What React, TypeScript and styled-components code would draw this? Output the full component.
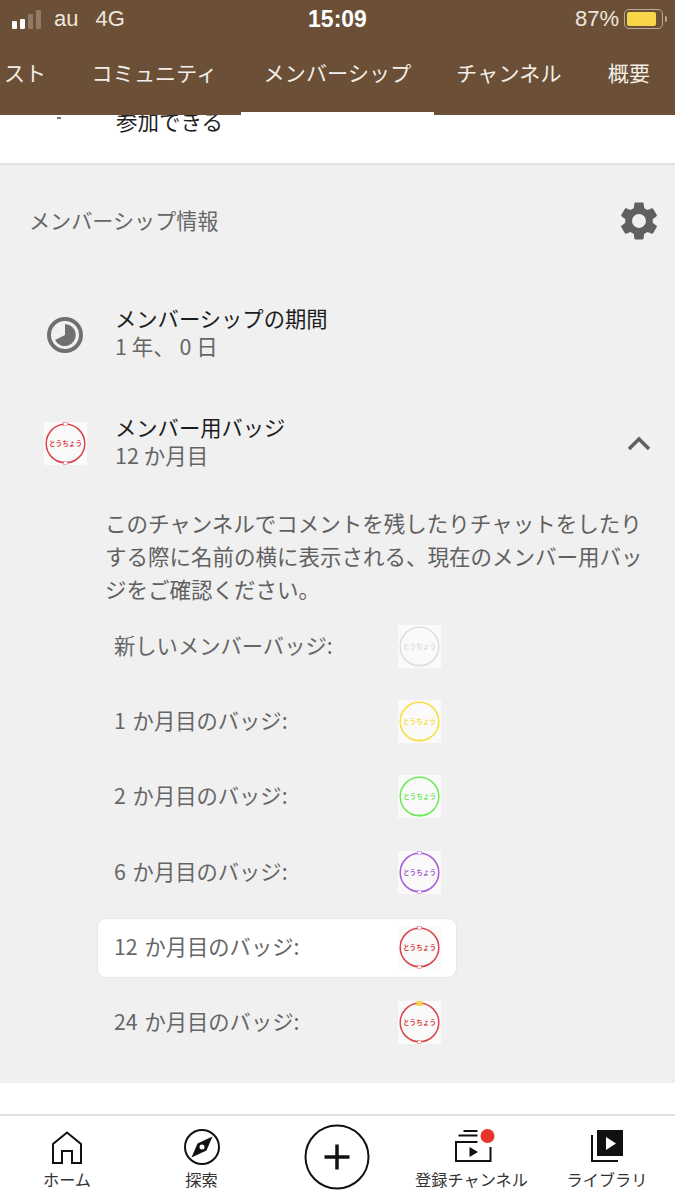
import React from "react"
import styled, { createGlobalStyle } from "styled-components"
import { MdSettings } from "react-icons/md"

const GlobalStyle = createGlobalStyle`
  html, body { margin: 0; padding: 0; background: #fff; }
  body { font-family: "Noto Sans CJK JP", "Liberation Sans", sans-serif; }
`

const Page = styled.div`
  width: 675px;
  height: 1200px;
  overflow: hidden;
  display: flex;
  flex-direction: column;
  position: relative;
`

const Header = styled.header`
  height: 115px;
  flex: none;
  background: #6b5037;
  color: #fff;
  position: relative;
  z-index: 1;
  overflow: hidden;
`

const StatusBar = styled.div`
  height: 38px;
  display: grid;
  grid-template-columns: 1fr auto 1fr;
  align-items: center;
  font-family: "Liberation Sans", sans-serif;
  font-size: 22px;
  color: #eee6de;
`

const StatusLeft = styled.div`
  display: flex;
  align-items: center;
  padding-left: 12px;
`

const Signal = styled.div`
  display: flex;
  align-items: flex-end;
  gap: 3px;
  margin-right: 13px;
`

const SignalBar = styled.span<{ $h: number; $on?: boolean }>`
  width: 5px;
  height: ${p => p.$h}px;
  border-radius: 1px;
  background: ${p => (p.$on ? "#fff" : "#8f7b68")};
`

const Carrier = styled.span`
  margin-right: 17px;
`

const Clock = styled.div`
  font-size: 23px;
  font-weight: 700;
  color: #fff;
`

const StatusRight = styled.div`
  display: flex;
  align-items: center;
  justify-content: flex-end;
  padding-right: 12px;
  gap: 5px;
`

const Battery = styled.div`
  width: 33px;
  height: 14px;
  border: 1.5px solid #b9aa9b;
  border-radius: 5px;
  padding: 2px;
  box-sizing: content-box;
  position: relative;
  &::after {
    content: "";
    position: absolute;
    right: -5px;
    top: 6px;
    width: 2px;
    height: 6px;
    background: #b9aa9b;
    border-radius: 0 2px 2px 0;
  }
`

const BatteryFill = styled.div`
  width: 29px;
  height: 100%;
  background: #f9d648;
  border-radius: 2px;
`

const Tabs = styled.nav`
  height: 77px;
  display: flex;
  margin-left: -39px;
`

const Tab = styled.div<{ $active?: boolean; $w: number }>`
  width: ${p => p.$w}px;
  flex: none;
  box-sizing: border-box;
  display: flex;
  justify-content: center;
  align-items: center;
  padding-bottom: 6px;
  font-size: 21px;
  letter-spacing: 0.2px;
  color: #f3eee8;
  border-bottom: 3px solid ${p => (p.$active ? "#fff" : "transparent")};
`

const TopStrip = styled.div`
  height: 48px;
  flex: none;
  background: #fff;
  overflow: hidden;
  display: flex;
  align-items: flex-start;
  padding-left: 116px;
  position: relative;
`

const ClippedText = styled.span`
  margin-top: -10px;
  line-height: 32px;
  font-size: 21.5px;
  color: #222;
`

const ClippedMark = styled.span`
  position: absolute;
  left: 57px;
  top: 2px;
  width: 4px;
  height: 2px;
  background: #777;
`

const Info = styled.section`
  height: 920px;
  flex: none;
  box-sizing: border-box;
  background: #f0f0f0;
  border-top: 2px solid #e2e2e2;
`

const InfoHeader = styled.div`
  height: 139px;
  box-sizing: border-box;
  display: flex;
  justify-content: space-between;
  align-items: flex-start;
  padding: 33px 13px 0 29px;
  font-size: 21.1px;
  line-height: 44px;
  color: #666;
`

const Row = styled.div`
  height: 109px;
  display: grid;
  grid-template-columns: 115px 1fr 36px;
  align-items: flex-start;
  padding-right: 12px;
`

const RowIcon = styled.div<{ $top: number }>`
  display: flex;
  justify-content: center;
  padding: ${p => p.$top}px 0 0 15px;
  box-sizing: border-box;
`

const RowTitle = styled.div`
  font-size: 21.3px;
  line-height: 28px;
  color: #1c1c1c;
`

const RowSub = styled.div`
  font-size: 21.5px;
  line-height: 28px;
  color: #666;
`

const Chevron = styled.svg`
  margin-top: 23px;
`

const Description = styled.p`
  margin: -16px 0 0 105px;
  width: 550px;
  font-size: 21.5px;
  line-height: 33px;
  color: #606060;
`

const BadgeList = styled.div`
  margin: 12px 0 0 98px;
  width: 358px;
`

const BadgeRow = styled.div<{ $current?: boolean }>`
  height: 58px;
  margin-bottom: 17.4px;
  box-sizing: border-box;
  padding: 0 15px 0 16px;
  display: flex;
  align-items: center;
  justify-content: space-between;
  font-size: 21.3px;
  word-spacing: 2px;
  color: #666;
  border-radius: 8px;
  background: ${p => (p.$current ? "#fff" : "transparent")};
  box-shadow: ${p => (p.$current ? "0 0 0 1px #e6e6e6" : "none")};
`

const BadgeLabel = styled.span`
  margin-bottom: 4px;
`

const Gap = styled.div`
  height: 31px;
  flex: none;
  background: #fff;
`

const BottomNav = styled.nav`
  flex: 1;
  background: #fff;
  border-top: 2px solid #e2e2e2;
  display: grid;
  grid-template-columns: 134px 135px 135px 135px 136px;
`

const NavItem = styled.div`
  display: flex;
  flex-direction: column;
  align-items: center;
  padding-top: 12px;
  font-size: 16.2px;
  line-height: 24px;
  color: #333;
  white-space: nowrap;
`

const NavIcon = styled.div`
  height: 38px;
  display: flex;
  align-items: center;
  justify-content: center;
  margin-bottom: 1px;
`

const NavPlus = styled.div`
  padding: 8px 0 0 1px;
  display: flex;
  justify-content: center;
`

type BadgeProps = { color: string; text?: string; top?: string; marks?: boolean; tail?: boolean }

const BadgeIcon: React.FC<BadgeProps> = ({ color, text, top, marks, tail }) => (
  <svg width="43" height="43" viewBox="0 0 43 43">
    <rect width="43" height="43" fill="#fafafa" />
    <circle cx="21.5" cy="21.5" r="19.3" fill="none" stroke={color} strokeWidth="1.5" />
    {marks && <rect x="19.5" y="0.5" width="4" height="3" fill="#fafafa" stroke={color} strokeWidth="0.4" />}
    {marks && <rect x="19.5" y="39.5" width="4" height="3" fill="#fafafa" stroke={color} strokeWidth="0.4" />}
    {top && <rect x="18.5" y="0" width="6" height="5" fill={top} />}
    {tail && <path d="M20 39 L21.5 41.5 L23 39" fill="none" stroke={color} strokeWidth="1" />}
    <text x="21.5" y="24" textAnchor="middle" fontSize="6.6" fontWeight="700" fill={text ?? color} fontFamily="'Noto Sans CJK JP', sans-serif">とうちょう</text>
  </svg>
)

const badges = [
  { label: "新しいメンバーバッジ:", color: "#dedede", text: "#dcdcdc", tail: true },
  { label: "1 か月目のバッジ:", color: "#f5e03f", tail: true },
  { label: "2 か月目のバッジ:", color: "#6fe85a", tail: true },
  { label: "6 か月目のバッジ:", color: "#a85bd6", marks: true },
  { label: "12 か月目のバッジ:", color: "#d9434a", marks: true, current: true },
  { label: "24 か月目のバッジ:", color: "#d9434a", top: "#f4d34c", marks: true },
]

const App: React.FC = () => (
  <Page>
    <GlobalStyle />
    <Header>
      <StatusBar>
        <StatusLeft>
          <Signal>
            <SignalBar $h={8} $on />
            <SignalBar $h={10} $on />
            <SignalBar $h={15} />
            <SignalBar $h={19} />
          </Signal>
          <Carrier>au</Carrier>
          <span>4G</span>
        </StatusLeft>
        <Clock>15:09</Clock>
        <StatusRight>
          <span>87%</span>
          <Battery><BatteryFill /></Battery>
        </StatusRight>
      </StatusBar>
      <Tabs>
        <Tab $w={107}>リスト</Tab>
        <Tab $w={173}>コミュニティ</Tab>
        <Tab $w={193} $active>メンバーシップ</Tab>
        <Tab $w={150}>チャンネル</Tab>
        <Tab $w={90}>概要</Tab>
      </Tabs>
    </Header>
    <TopStrip>
      <ClippedMark />
      <ClippedText>参加できる</ClippedText>
    </TopStrip>
    <Info>
      <InfoHeader>
        <span>メンバーシップ情報</span>
        <MdSettings size={46} color="#606060" />
      </InfoHeader>
      <Row>
        <RowIcon $top={12}>
          <svg width="38" height="38" viewBox="0 0 38 38">
            <circle cx="19" cy="19" r="16" fill="none" stroke="#707070" strokeWidth="4" />
            <path d="M19 8 A11 11 0 1 1 9 24 L19 19 Z" fill="#707070" />
          </svg>
        </RowIcon>
        <div>
          <RowTitle>メンバーシップの期間</RowTitle>
          <RowSub>1 年、 0 日</RowSub>
        </div>
      </Row>
      <Row>
        <RowIcon $top={9}>
          <BadgeIcon color="#d9434a" marks />
        </RowIcon>
        <div>
          <RowTitle>メンバー用バッジ</RowTitle>
          <RowSub>12 か月目</RowSub>
        </div>
        <Chevron width="24" height="16" viewBox="0 0 24 16">
          <path d="M2 13 L12 3 L22 13" fill="none" stroke="#606060" strokeWidth="3.5" />
        </Chevron>
      </Row>
      <Description>
        このチャンネルでコメントを残したりチャットをしたりする際に名前の横に表示される、現在のメンバー用バッジをご確認ください。
      </Description>
      <BadgeList>
        {badges.map(b => (
          <BadgeRow key={b.label} $current={b.current}>
            <BadgeLabel>{b.label}</BadgeLabel>
            <BadgeIcon color={b.color} text={b.text} top={b.top} marks={b.marks} tail={b.tail} />
          </BadgeRow>
        ))}
      </BadgeList>
    </Info>
    <Gap />
    <BottomNav>
      <NavItem>
        <NavIcon>
          <svg width="30" height="33" viewBox="0 0 30 33">
            <path d="M1 32 V13 L15 1.5 L29 13 V32 H20 V20 H10 V32 Z" fill="none" stroke="#111" strokeWidth="2" />
          </svg>
        </NavIcon>
        ホーム
      </NavItem>
      <NavItem>
        <NavIcon>
          <svg width="38" height="38" viewBox="0 0 38 38">
            <circle cx="19" cy="19" r="17" fill="none" stroke="#111" strokeWidth="2" />
            <path d="M29.5 8.5 L23.5 22.5 L8.5 29.5 L14.5 15.5 Z" fill="#111" />
            <circle cx="19" cy="19" r="2.5" fill="#fff" />
          </svg>
        </NavIcon>
        探索
      </NavItem>
      <NavPlus>
        <svg width="66" height="66" viewBox="0 0 66 66">
          <circle cx="33" cy="33" r="31.5" fill="none" stroke="#111" strokeWidth="2" />
          <path d="M20.5 33 H45.5 M33 20.5 V45.5" stroke="#111" strokeWidth="3.5" />
        </svg>
      </NavPlus>
      <NavItem>
        <NavIcon>
          <svg width="46" height="38" viewBox="0 0 46 38">
            <path d="M14.5 3 H28.5 M9.5 7.5 H28.5" stroke="#111" strokeWidth="2" />
            <path d="M28.5 14 H7 V33 H41.5 V19" fill="none" stroke="#111" strokeWidth="2" />
            <path d="M20.5 19 L29 24 L20.5 29 Z" fill="#111" />
            <circle cx="38.5" cy="8" r="7" fill="#e8352b" />
          </svg>
        </NavIcon>
        登録チャンネル
      </NavItem>
      <NavItem>
        <NavIcon>
          <svg width="36" height="36" viewBox="0 0 36 36">
            <path d="M8 1 H34 V27 H8 Z" fill="#111" />
            <path d="M3 6 V32 H29" fill="none" stroke="#111" strokeWidth="2" />
            <path d="M17 8 L27 14.5 L17 21 Z" fill="#fff" />
          </svg>
        </NavIcon>
        ライブラリ
      </NavItem>
    </BottomNav>
  </Page>
)

export default App
